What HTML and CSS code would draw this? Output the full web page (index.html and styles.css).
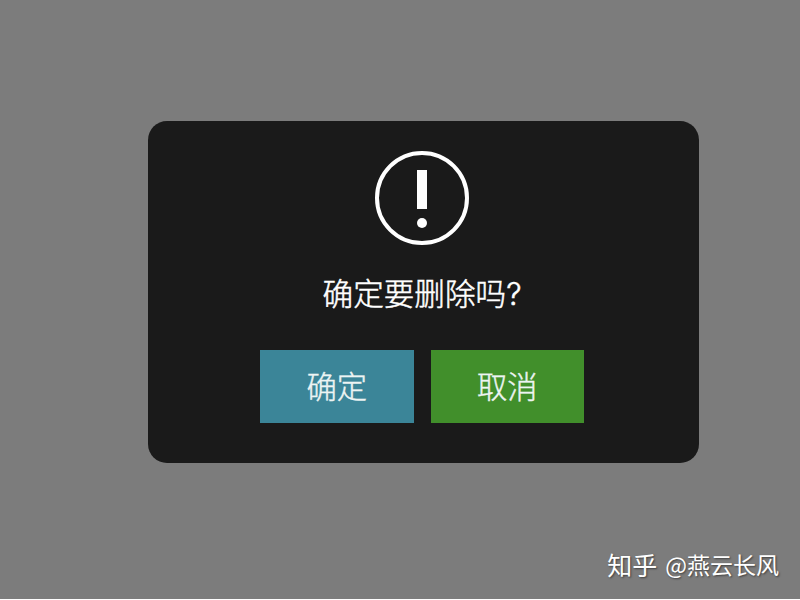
FILE: index.html
```html
<!DOCTYPE html>
<html lang="zh-CN">
<head>
<meta charset="utf-8">
<title>确定要删除吗?</title>
<link rel="stylesheet" href="styles.css">
</head>
<body>
<main class="dialog">
  <svg class="icon" width="94" height="94" viewBox="0 0 94 94">
    <circle cx="47" cy="47" r="45" fill="none" stroke="#fff" stroke-width="4"/>
    <rect x="42" y="19" width="10" height="39" fill="#fff"/>
    <circle cx="47" cy="72" r="5" fill="#fff"/>
  </svg>
  <p class="message">确定要删除吗<span class="mark">?</span></p>
  <div class="actions">
    <button class="btn confirm">确定</button>
    <button class="btn cancel">取消</button>
  </div>
</main>
<div class="watermark"><span class="brand">知乎</span><span class="author">@燕云长风</span></div>
</body>
</html>
```
FILE: styles.css
```css
* {
  box-sizing: border-box;
}

body {
  margin: 0;
  height: 600px;
  overflow: hidden;
  border-bottom: 1px solid #fff;
  background: #fff;
  background: #7c7c7c;
  font-family: "Noto Sans CJK SC", sans-serif;
  font-weight: 300;
}

.dialog {
  display: flex;
  flex-direction: column;
  align-items: center;
  width: 551px;
  height: 342px;
  margin: 121px 0 0 147.5px;
  padding: 30px 2px 0 0;
  border-radius: 19px;
  background: #1a1a1a;
}

.icon {
  flex: none;
}

.message {
  margin: 25px 0 0;
  height: 44px;
  line-height: 44px;
  font-size: 30.6px;
  color: #fff;
  white-space: nowrap;
  -webkit-text-stroke: 0.5px #fff;
}

.mark {
  font-family: Inter, sans-serif;
}

.actions {
  display: flex;
  gap: 17px;
  margin-top: 36px;
}

.btn {
  width: 153.5px;
  height: 73px;
  padding: 0 0 2px;
  border: 0;
  font: inherit;
  font-size: 30.3px;
  line-height: 71px;
  color: #edf4f3;
  -webkit-text-stroke: 0.4px #edf4f3;
}

.confirm {
  background: #3b8598;
}

.cancel {
  background: #418f2b;
}

.watermark {
  position: absolute;
  right: 21px;
  bottom: 18px;
  display: flex;
  gap: 8px;
  line-height: 36px;
  font-weight: 400;
  color: #fff;
  text-shadow: 1px 1px 2px rgba(0, 0, 0, 0.5);
}

.brand {
  font-size: 25px;
}

.author {
  font-size: 23px;
}
```
